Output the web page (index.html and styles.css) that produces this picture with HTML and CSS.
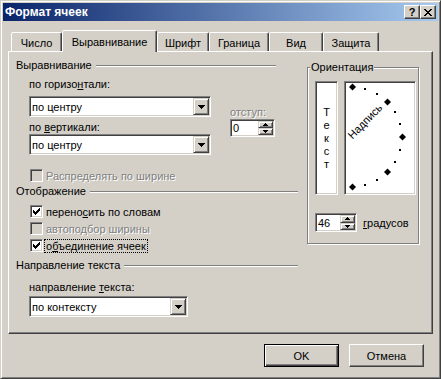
FILE: index.html
```html
<!DOCTYPE html>
<html lang="ru">
<head>
<meta charset="utf-8">
<title>Формат ячеек</title>
<link rel="stylesheet" href="styles.css">
</head>
<body>
<div class="window">
  <div class="titlebar">
    <span class="title">Формат ячеек</span>
    <div class="tbtns">
      <span class="tbtn help">?</span>
      <span class="tbtn close"><svg width="8" height="7" viewBox="0 0 8 7" shape-rendering="crispEdges"><path d="M0 0h2v1h1v1h2V1h1V0h2v1H7v1H6v1H5v1h1v1h1v1h1v1H6V6H5V5H3v1H2v1H0V6h1V5h1V4h1V3H2V2H1V1H0z" fill="#000"/></svg></span>
    </div>
  </div>
  <div class="content">
    <div class="tabs">
      <div class="tab t1">Число</div>
      <div class="tab t2 sel">Выравнивание</div>
      <div class="tab t3">Шрифт</div>
      <div class="tab t4">Граница</div>
      <div class="tab t5">Вид</div>
      <div class="tab t6">Защита</div>
    </div>
    <div class="panel">
      <div class="leftcol">
        <div class="ghead g1">Выравнивание</div>
        <div class="align-block">
          <div class="selcol">
            <div class="lbl l1">по горизо<u>н</u>тали:</div>
            <div class="combo c1"><span class="val">по центру</span><span class="drop"><svg width="7" height="4" viewBox="0 0 7 4" shape-rendering="crispEdges"><path d="M0 0h7v1H6v1H5v1H4v1H3V3H2V2H1V1H0z" fill="#000"/></svg></span></div>
            <div class="lbl l2">по <u>в</u>ертикали:</div>
            <div class="combo c2"><span class="val">по центру</span><span class="drop"><svg width="7" height="4" viewBox="0 0 7 4" shape-rendering="crispEdges"><path d="M0 0h7v1H6v1H5v1H4v1H3V3H2V2H1V1H0z" fill="#000"/></svg></span></div>
          </div>
          <div class="indentcol">
            <div class="lbl dis l3">отступ:</div>
            <div class="spin sp1"><span class="spinval">0</span><span class="spinbtns"><span class="sb"><svg width="5" height="3" viewBox="0 0 5 3" shape-rendering="crispEdges"><path d="M2 0h1v1h1v1h1v1H0V2h1V1h1z" fill="#000"/></svg></span><span class="sb"><svg width="5" height="3" viewBox="0 0 5 3" shape-rendering="crispEdges"><path d="M0 0h5v1H4v1H3v1H2V2H1V1H0z" fill="#000"/></svg></span></span></div>
          </div>
        </div>
        <div class="chk r0 dis"><span class="box"></span><span class="ctext">Распределять по ширине</span></div>
        <div class="ghead g2">Отображение</div>
        <div class="chk r1"><span class="box"><svg width="7" height="7" viewBox="0 0 7 7" shape-rendering="crispEdges"><path d="M0 2h1v3H0zM1 3h1v3H1zM2 4h1v3H2zM3 3h1v3H3zM4 2h1v3H4zM5 1h1v3H5zM6 0h1v3H6z" fill="#000"/></svg></span><span class="ctext">перено<u>с</u>ить по словам</span></div>
        <div class="chk r2 dis"><span class="box"></span><span class="ctext">автоподбор ширины</span></div>
        <div class="chk r3"><span class="box"><svg width="7" height="7" viewBox="0 0 7 7" shape-rendering="crispEdges"><path d="M0 2h1v3H0zM1 3h1v3H1zM2 4h1v3H2zM3 3h1v3H3zM4 2h1v3H4zM5 1h1v3H5zM6 0h1v3H6z" fill="#000"/></svg></span><span class="ctext focus">о<u>б</u>ъединение ячеек</span></div>
        <div class="ghead g3">Направление текста</div>
        <div class="lbl l4">направление <u>т</u>екста:</div>
        <div class="combo c3"><span class="val">по контексту</span><span class="drop"><svg width="7" height="4" viewBox="0 0 7 4" shape-rendering="crispEdges"><path d="M0 0h7v1H6v1H5v1H4v1H3V3H2V2H1V1H0z" fill="#000"/></svg></span></div>
      </div>
      <div class="frame">
        <span class="flabel">Ориентация</span>
        <div class="orow">
          <div class="vtext"><span>Т</span><span>е</span><span>к</span><span>с</span><span>т</span></div>
          <div class="dial">
            <svg width="68" height="110" viewBox="0 0 68 110">
              <g fill="#000" shape-rendering="crispEdges">
                <rect x="18" y="5" width="2" height="2"/>
                <rect x="30" y="10" width="2" height="2"/>
                <rect x="48" y="28" width="2" height="2"/>
                <rect x="53" y="40" width="2" height="2"/>
                <rect x="53" y="66" width="2" height="2"/>
                <rect x="48" y="78" width="2" height="2"/>
                <rect x="30" y="96" width="2" height="2"/>
                <rect x="18" y="101" width="2" height="2"/>
              </g>
              <g fill="#000">
                <polygon points="6.5,0.5 10,4 6.5,7.5 3,4"/>
                <polygon points="41.5,15.5 45,19 41.5,22.5 38,19"/>
                <polygon points="56.5,50.5 60,54 56.5,57.5 53,54"/>
                <polygon points="41.5,85.5 45,89 41.5,92.5 38,89"/>
                <polygon points="6.5,100.5 10,104 6.5,107.5 3,104"/>
              </g>
              <g transform="translate(6.5 54) rotate(-46)">
                <text class="dialtext" x="-2" y="2">Надпись</text>
              </g>
            </svg>
          </div>
        </div>
        <div class="degrow">
          <div class="spin sp2"><span class="spinval">46</span><span class="spinbtns"><span class="sb"><svg width="5" height="3" viewBox="0 0 5 3" shape-rendering="crispEdges"><path d="M2 0h1v1h1v1h1v1H0V2h1V1h1z" fill="#000"/></svg></span><span class="sb"><svg width="5" height="3" viewBox="0 0 5 3" shape-rendering="crispEdges"><path d="M0 0h5v1H4v1H3v1H2V2H1V1H0z" fill="#000"/></svg></span></span></div>
          <span class="deglbl"><u>г</u>радусов</span>
        </div>
      </div>
    </div>
    <div class="buttons">
      <div class="btn def">OK</div>
      <div class="btn">Отмена</div>
    </div>
  </div>
</div>
</body>
</html>
```

FILE: styles.css
```css
* { box-sizing: border-box; }
html, body { margin: 0; padding: 0; }
body {
  background: #d4d0c8;
  font-family: "Liberation Sans", Arial, sans-serif;
  font-size: 11px;
  color: #000;
}
u { text-decoration: underline; text-underline-offset: 1px; }

.window {
  width: 441px;
  height: 379px;
  border: 1px solid;
  border-color: #d4d0c8 #404040 #404040 #d4d0c8;
  box-shadow: inset 1px 1px #fff, inset -1px -1px #808080;
  padding: 2px;
  background: #d4d0c8;
  display: flex;
  flex-direction: column;
}

.titlebar {
  height: 18px;
  flex: none;
  background: linear-gradient(to right, #0a246a, #a6caf0);
  display: flex;
  align-items: center;
  justify-content: space-between;
  padding: 0 2px 0 2px;
}
.title { color: #fff; font-weight: bold; font-size: 12px; }
.tbtns { display: flex; }
.tbtn {
  width: 16px;
  height: 14px;
  background: #d4d0c8;
  border: 1px solid;
  border-color: #fff #404040 #404040 #fff;
  box-shadow: inset -1px -1px #808080;
  display: flex;
  align-items: center;
  justify-content: center;
  font-weight: bold;
  font-size: 11px;
  line-height: 1;
}
.tbtn svg { display: block; }

.content {
  flex: 1;
  padding: 0 5px;
  display: flex;
  flex-direction: column;
}

.tabs {
  display: flex;
  align-items: flex-end;
  height: 21px;
  margin-top: 9px;
  padding-left: 3px;
}
.tab {
  height: 19px;
  border: 1px solid;
  border-bottom: none;
  border-color: #fff #404040 transparent #fff;
  box-shadow: inset -1px 0 #808080;
  border-radius: 2px 2px 0 0;
  text-align: center;
  line-height: 14px;
  padding-top: 3px;
  background: #d4d0c8;
}
.tab.sel {
  height: 22px;
  margin-bottom: -1px;
  position: relative;
  z-index: 1;
  padding-top: 4px;
}
.t1 { width: 51px; }
.t2 { width: 95px; }
.t3 { width: 52px; }
.t4 { width: 60px; }
.t5 { width: 54px; }
.t6 { width: 56px; }

.panel {
  height: 283px;
  flex: none;
  border: 1px solid;
  border-color: #fff #404040 #404040 #fff;
  box-shadow: inset -1px -1px #808080;
  padding: 6px 0 0 7px;
  display: flex;
  align-items: flex-start;
}

.leftcol {
  width: 282px;
  display: flex;
  flex-direction: column;
}

.ghead {
  display: flex;
  align-items: center;
  height: 14px;
  line-height: 14px;
}
.ghead::after {
  content: "";
  flex: 1;
  height: 0;
  border-top: 1px solid #808080;
  border-bottom: 1px solid #fff;
  margin-left: 4px;
  margin-top: 2px;
}
.g1 { margin-right: 22px; }
.g2 { margin-top: 0; }
.g3 { margin-top: 4px; }

.lbl { height: 14px; line-height: 14px; white-space: nowrap; }
.dis { color: #808080; }
.lbl.dis, .chk.dis .ctext { text-shadow: 1px 1px 0 #fff; }

.align-block { display: flex; }
.selcol { margin-left: 13px; width: 182px; display: flex; flex-direction: column; }
.l1 { margin-top: 5px; }
.c1 { margin-top: 5px; }
.l2 { margin-top: 3px; }
.indentcol { margin-left: 19px; display: flex; flex-direction: column; }
.l3 { margin-top: 33px; }

.combo {
  display: flex;
  height: 21px;
  background: #fff;
  border: 1px solid;
  border-color: #808080 #fff #fff #808080;
  box-shadow: inset 1px 1px #404040, inset -1px -1px #d4d0c8;
  padding: 1px;
  align-items: center;
}
.combo .val { flex: 1; padding-left: 1px; white-space: nowrap; }
.drop {
  width: 16px;
  height: 17px;
  background: #d4d0c8;
  border: 1px solid;
  border-color: #d4d0c8 #404040 #404040 #d4d0c8;
  box-shadow: inset 1px 1px #fff, inset -1px -1px #808080;
  display: flex;
  align-items: center;
  justify-content: center;
}
.drop svg { display: block; }
.c3 { width: 159px; margin-left: 13px; margin-top: 2px; }
.l4 { margin-left: 13px; margin-top: 8px; }

.spin {
  display: flex;
  background: #fff;
  border: 1px solid;
  border-color: #808080 #fff #fff #808080;
  box-shadow: inset 1px 1px #404040, inset -1px -1px #d4d0c8;
  padding: 1px;
}
.sp1 { width: 45px; height: 18px; }
.sp2 { width: 42px; height: 19px; }
.spinval { flex: 1; padding-left: 1px; display: flex; align-items: center; }
.spinbtns { width: 15px; display: flex; flex-direction: column; }
.sb {
  flex: 1;
  background: #d4d0c8;
  border: 1px solid;
  border-color: #d4d0c8 #404040 #404040 #d4d0c8;
  box-shadow: inset 1px 1px #fff, inset -1px -1px #808080;
  display: flex;
  align-items: center;
  justify-content: center;
}
.sb svg { display: block; }

.chk {
  display: flex;
  align-items: center;
  height: 17px;
  margin-left: 14px;
}
.chk .box {
  width: 13px;
  height: 13px;
  flex: none;
  background: #fff;
  border: 1px solid;
  border-color: #808080 #fff #fff #808080;
  box-shadow: inset 1px 1px #404040, inset -1px -1px #d4d0c8;
  display: flex;
  align-items: center;
  justify-content: center;
}
.chk .box svg { display: block; }
.chk.dis .box { background: #d4d0c8; }
.ctext {
  margin-left: 1px;
  padding: 0 1px;
  border: 1px solid transparent;
  height: 14px;
  line-height: 12px;
  white-space: nowrap;
}
.ctext.focus { border: 1px dotted #000; }
.r0 { margin-top: 12px; }
.r1 { margin-top: 5px; }

.frame {
  width: 112px;
  height: 177px;
  margin-left: 9px;
  margin-top: 9px;
  border: 1px solid #808080;
  box-shadow: inset 1px 1px #fff, 1px 1px #fff;
  display: flex;
  flex-direction: column;
}
.flabel {
  align-self: flex-start;
  margin-top: -8px;
  margin-left: 2px;
  padding: 0 1px;
  height: 14px;
  line-height: 14px;
  background: #d4d0c8;
}
.orow {
  display: flex;
  gap: 6px;
  margin-top: 7px;
  margin-left: 7px;
}
.vtext {
  width: 23px;
  height: 114px;
  background: #fff;
  border: 1px solid;
  border-color: #808080 #fff #fff #808080;
  box-shadow: inset 1px 1px #404040, inset -1px -1px #d4d0c8;
  display: flex;
  flex-direction: column;
  align-items: center;
  justify-content: center;
  line-height: 13px;
}
.dial {
  width: 72px;
  height: 114px;
  background: #fff;
  border: 1px solid;
  border-color: #808080 #fff #fff #808080;
  box-shadow: inset 1px 1px #404040, inset -1px -1px #d4d0c8;
  padding: 1px;
}
.dial svg { display: block; }
.dialtext { font-family: "Liberation Sans", Arial, sans-serif; font-size: 11px; fill: #000; }

.degrow {
  display: flex;
  align-items: center;
  margin-top: 18px;
  margin-left: 7px;
}
.deglbl { margin-left: 6px; }

.buttons {
  display: flex;
  justify-content: flex-end;
  gap: 10px;
  margin-top: 10px;
  padding-right: 9px;
}
.btn {
  width: 75px;
  height: 23px;
  display: flex;
  align-items: center;
  justify-content: center;
  border: 1px solid;
  border-color: #fff #404040 #404040 #fff;
  box-shadow: inset -1px -1px #808080;
}
.btn.def {
  border-color: #000;
  box-shadow: inset 1px 1px #fff, inset -1px -1px #404040, inset -2px -2px #808080;
}
```
